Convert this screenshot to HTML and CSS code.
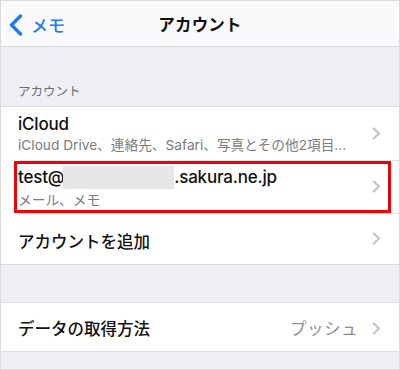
FILE: index.html
```html
<!DOCTYPE html>
<html lang="ja">
<head>
<meta charset="utf-8">
<link rel="stylesheet" href="styles.css">
</head>
<body>
<div class="screen">
  <header class="nav">
    <div class="back">
      <svg class="back-icon" width="15" height="22" viewBox="0 0 15 22"><path d="M12.5 2 L3.5 11 L12.5 20" fill="none" stroke="#1b7cf3" stroke-width="3.4" stroke-linecap="round" stroke-linejoin="round"/></svg>
      <span class="back-label">メモ</span>
    </div>
    <h1 class="title">アカウント</h1>
  </header>

  <div class="section-head">アカウント</div>
  <ul class="group">
    <li class="row row-two">
      <div class="texts">
        <div class="main latin">iCloud</div>
        <div class="sub">iCloud Drive、連絡先、Safari、写真とその他2項目...</div>
      </div>
      <svg class="chev" width="9" height="13" viewBox="0 0 9 13"><path d="M1.8 1.5 L7 6.5 L1.8 11.5" fill="none" stroke="#c4c4c8" stroke-width="2.2" stroke-linecap="round" stroke-linejoin="round"/></svg>
    </li>
    <li class="row row-two highlighted">
      <div class="texts">
        <div class="main latin">test@<span class="mask"></span>.sakura.ne.jp</div>
        <div class="sub">メール、メモ</div>
      </div>
      <svg class="chev" width="9" height="13" viewBox="0 0 9 13"><path d="M1.8 1.5 L7 6.5 L1.8 11.5" fill="none" stroke="#c4c4c8" stroke-width="2.2" stroke-linecap="round" stroke-linejoin="round"/></svg>
      <span class="redbox"></span>
    </li>
    <li class="row row-one">
      <div class="main">アカウントを追加</div>
      <svg class="chev" width="9" height="13" viewBox="0 0 9 13"><path d="M1.8 1.5 L7 6.5 L1.8 11.5" fill="none" stroke="#c4c4c8" stroke-width="2.2" stroke-linecap="round" stroke-linejoin="round"/></svg>
    </li>
  </ul>

  <ul class="group group-second">
    <li class="row row-last">
      <div class="main">データの取得方法</div>
      <span class="value">プッシュ</span>
      <svg class="chev" width="9" height="13" viewBox="0 0 9 13"><path d="M1.8 1.5 L7 6.5 L1.8 11.5" fill="none" stroke="#c4c4c8" stroke-width="2.2" stroke-linecap="round" stroke-linejoin="round"/></svg>
    </li>
  </ul>
</div>
</body>
</html>
```

FILE: styles.css
```css
* { box-sizing: border-box; }
html, body { margin: 0; padding: 0; }
body {
  width: 400px;
  height: 370px;
  overflow: hidden;
  font-family: "Noto Sans CJK JP", "Noto Sans", sans-serif;
  color: #111;
}
.screen {
  width: 400px;
  height: 370px;
  border: 1px solid #dadadc;
  background: #efeff4;
  display: flex;
  flex-direction: column;
}
.nav {
  height: 46px;
  flex: none;
  background: #fafafc;
  border-bottom: 1px solid #d6d6da;
  display: flex;
  align-items: center;
  justify-content: center;
  position: relative;
}
.back {
  position: absolute;
  left: 7px;
  top: 0;
  height: 47px;
  display: flex;
  align-items: center;
  gap: 8px;
  color: #1b7cf3;
}
.back-icon { display: block; }
.back-label {
  font-size: 17px;
  line-height: 1;
  font-weight: 500;
}
.title {
  margin: 0;
  margin-top: 2px;
  font-size: 16.5px;
  font-weight: 700;
  line-height: 1;
  letter-spacing: 0.2px;
}
.section-head {
  height: 59px;
  flex: none;
  padding: 0 0 9px 17px;
  display: flex;
  align-items: flex-end;
  font-size: 12.5px;
  color: #6d6d72;
  line-height: 1;
}
.group {
  list-style: none;
  margin: 0;
  padding: 0;
  background: #fff;
  border-top: 1px solid #dcdce0;
  border-bottom: 1px solid #dcdce0;
  flex: none;
}
.group-second { margin-top: 37px; }
.row {
  position: relative;
  display: flex;
  align-items: center;
  padding: 0 17px 0 17px;
}
.row-two { height: 53px; }
.row-one { height: 51px; padding-top: 4px; }
.row-one .chev { margin-top: -4px; }
.row-last { height: 48px; padding-top: 2px; }
.row + .row::before {
  content: "";
  position: absolute;
  left: 17px;
  right: 0;
  top: 0;
  border-top: 1px solid #e2e2e6;
}
.texts {
  flex: 1;
  display: flex;
  flex-direction: column;
  gap: 3px;
  min-width: 0;
}
.main {
  flex: 1;
  font-size: 16.5px;
  line-height: 20px;
  font-weight: 500;
  color: #111;
  white-space: nowrap;
}
.main.latin {
  font-family: "Inter", "Noto Sans CJK JP", sans-serif;
  font-size: 17px;
  font-weight: 500;
  letter-spacing: -0.2px;
  display: flex;
  align-items: center;
}
.sub {
  font-size: 13.7px;
  line-height: 16px;
  color: #7b7b80;
  white-space: nowrap;
  font-family: "Inter", "Noto Sans CJK JP", sans-serif;
}
.mask {
  display: inline-block;
  width: 111px;
  height: 23px;
  background: #e7e7e7;
  margin: 0 0 0 -1px;
}
.value {
  font-size: 16.5px;
  color: #8e8e93;
  margin-right: 14px;
  line-height: 20px;
  letter-spacing: 0.5px;
}
.chev { flex: none; display: block; margin-right: 0; }
.row .chev { margin-left: auto; margin-right: 1px; }
.redbox {
  position: absolute;
  left: 13px;
  right: 8px;
  top: 1px;
  bottom: 0;
  border: 3px solid #f2000a;
  pointer-events: none;
}
```
